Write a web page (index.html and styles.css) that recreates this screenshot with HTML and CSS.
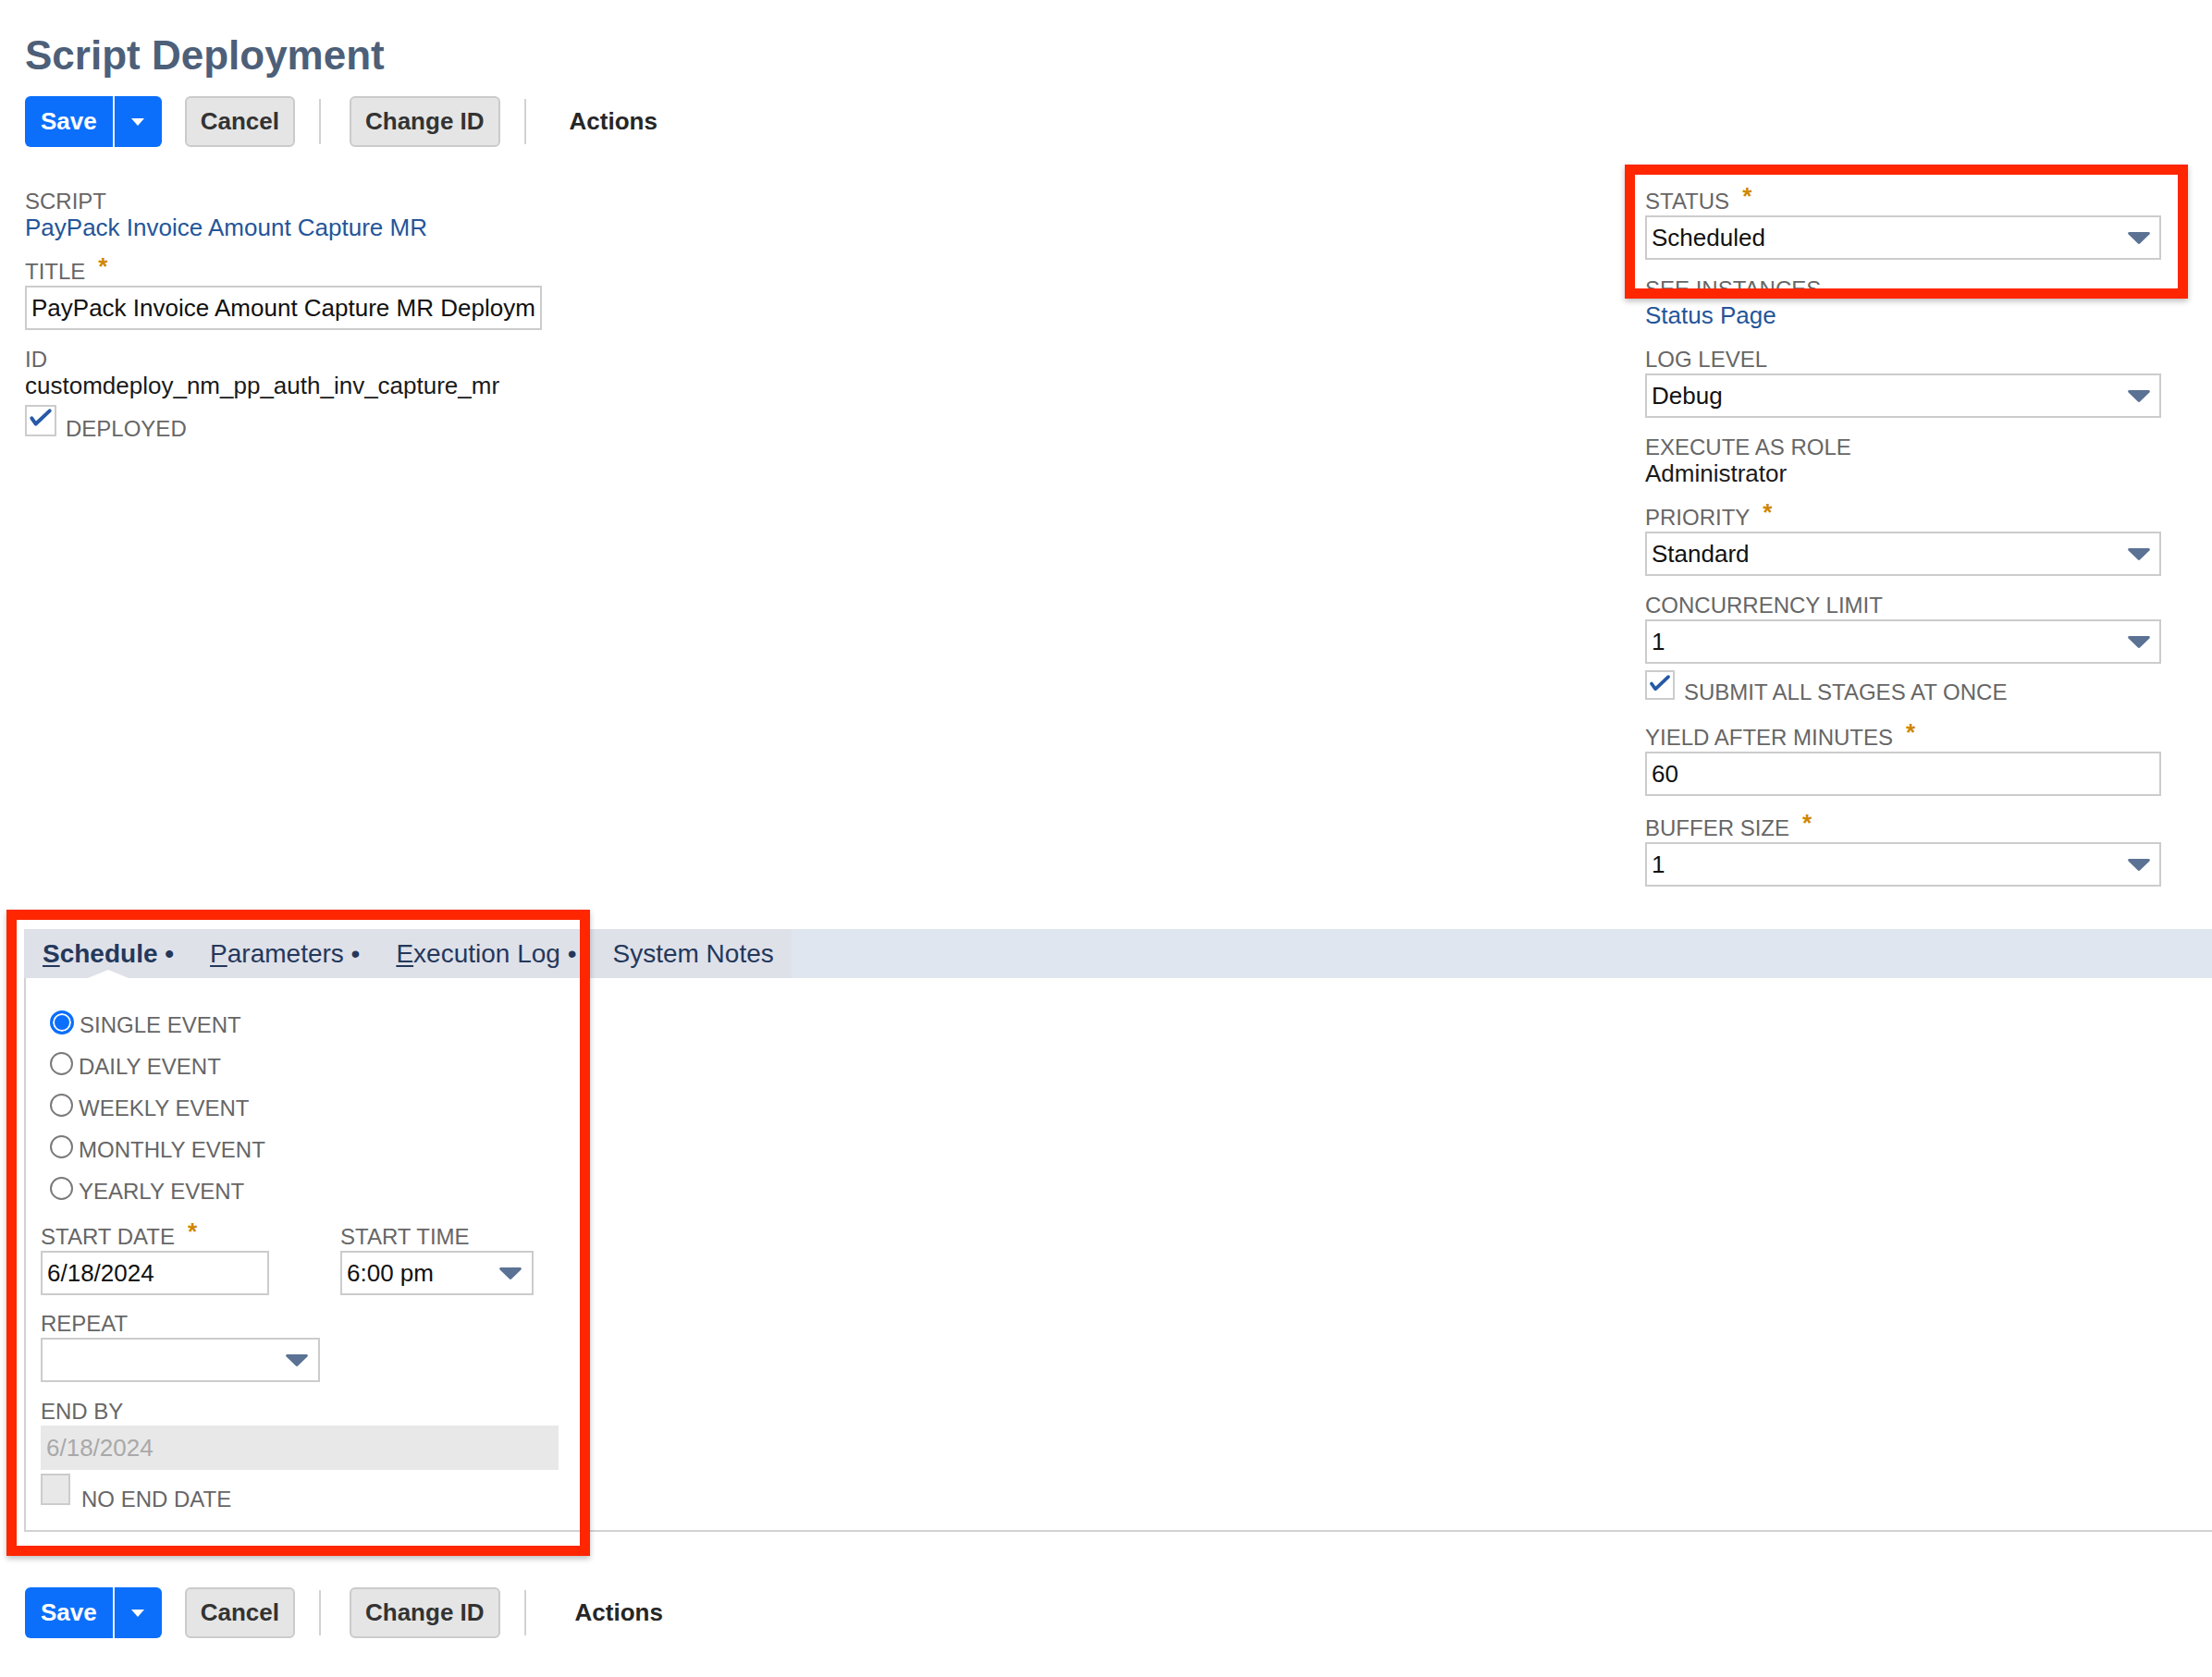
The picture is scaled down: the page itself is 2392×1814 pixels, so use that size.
FILE: index.html
```html
<!DOCTYPE html>
<html lang="en">
<head>
<meta charset="utf-8">
<title>Script Deployment</title>
<link rel="stylesheet" href="styles.css">
</head>
<body>
<div class="page">
  <h1 class="title">Script Deployment</h1>

  <div class="toolbar">
    <div class="btn-primary"><span class="btn-main">Save</span><span class="btn-split"><span class="caret"></span></span></div>
    <div class="btn">Cancel</div>
    <span class="sep"></span>
    <div class="btn btn-wide">Change ID</div>
    <span class="sep"></span>
    <div class="actions">Actions</div>
  </div>

  <div class="main">
    <div class="col-left">
      <div class="group group-val">
        <div class="label">Script</div>
        <a class="link">PayPack Invoice Amount Capture MR</a>
      </div>
      <div class="group">
        <div class="label">Title<span class="req">*</span></div>
        <input class="input input-title" type="text" value="PayPack Invoice Amount Capture MR Deployment">
      </div>
      <div class="group group-val group-id">
        <div class="label">ID</div>
        <div class="value">customdeploy_nm_pp_auth_inv_capture_mr</div>
      </div>
      <div class="check-row">
        <span class="checkbox"><svg viewBox="0 0 34 34" width="30" height="30"><path d="M6 14l5 7L28 5" stroke="#2659a6" stroke-width="4.5" fill="none" stroke-linecap="round" stroke-linejoin="round"/></svg></span>
        <span class="check-label">Deployed</span>
      </div>
    </div>

    <div class="col-right">
      <div class="group">
        <div class="label">Status<span class="req">*</span></div>
        <div class="select"><span>Scheduled</span><svg class="dd" viewBox="0 0 24 13" width="24" height="13"><path d="M1.6 0h20.8a1.4 1.4 0 0 1 1 2.4L13.3 12.2a1.8 1.8 0 0 1-2.6 0L.6 2.4A1.4 1.4 0 0 1 1.6 0z" fill="#5b7294"/></svg></div>
      </div>
      <div class="group group-val">
        <div class="label">See Instances</div>
        <a class="link">Status Page</a>
      </div>
      <div class="group">
        <div class="label">Log Level</div>
        <div class="select"><span>Debug</span><svg class="dd" viewBox="0 0 24 13" width="24" height="13"><path d="M1.6 0h20.8a1.4 1.4 0 0 1 1 2.4L13.3 12.2a1.8 1.8 0 0 1-2.6 0L.6 2.4A1.4 1.4 0 0 1 1.6 0z" fill="#5b7294"/></svg></div>
      </div>
      <div class="group group-val">
        <div class="label">Execute as Role</div>
        <div class="value">Administrator</div>
      </div>
      <div class="group">
        <div class="label">Priority<span class="req">*</span></div>
        <div class="select"><span>Standard</span><svg class="dd" viewBox="0 0 24 13" width="24" height="13"><path d="M1.6 0h20.8a1.4 1.4 0 0 1 1 2.4L13.3 12.2a1.8 1.8 0 0 1-2.6 0L.6 2.4A1.4 1.4 0 0 1 1.6 0z" fill="#5b7294"/></svg></div>
      </div>
      <div class="group group-tight">
        <div class="label">Concurrency Limit</div>
        <div class="select"><span>1</span><svg class="dd" viewBox="0 0 24 13" width="24" height="13"><path d="M1.6 0h20.8a1.4 1.4 0 0 1 1 2.4L13.3 12.2a1.8 1.8 0 0 1-2.6 0L.6 2.4A1.4 1.4 0 0 1 1.6 0z" fill="#5b7294"/></svg></div>
      </div>
      <div class="check-row check-stages">
        <span class="checkbox"><svg viewBox="0 0 34 34" width="30" height="30"><path d="M6 14l5 7L28 5" stroke="#2659a6" stroke-width="4.5" fill="none" stroke-linecap="round" stroke-linejoin="round"/></svg></span>
        <span class="check-label">Submit All Stages at Once</span>
      </div>
      <div class="group group-yield">
        <div class="label">Yield After Minutes<span class="req">*</span></div>
        <input class="input" type="text" value="60">
      </div>
      <div class="group group-last">
        <div class="label">Buffer Size<span class="req">*</span></div>
        <div class="select"><span>1</span><svg class="dd" viewBox="0 0 24 13" width="24" height="13"><path d="M1.6 0h20.8a1.4 1.4 0 0 1 1 2.4L13.3 12.2a1.8 1.8 0 0 1-2.6 0L.6 2.4A1.4 1.4 0 0 1 1.6 0z" fill="#5b7294"/></svg></div>
      </div>
    </div>
  </div>

  <div class="tabs">
    <div class="tabbar">
      <div class="tablist">
        <span class="tab active"><u>S</u>chedule •</span>
        <span class="tab"><u>P</u>arameters •</span>
        <span class="tab"><u>E</u>xecution Log •</span>
        <span class="tab">System Notes</span>
      </div>
    </div>
    <div class="panel">
      <div class="radios">
        <div class="radio-row"><span class="radio on"></span><span class="radio-label">Single Event</span></div>
        <div class="radio-row"><span class="radio"></span><span class="radio-label">Daily Event</span></div>
        <div class="radio-row"><span class="radio"></span><span class="radio-label">Weekly Event</span></div>
        <div class="radio-row"><span class="radio"></span><span class="radio-label">Monthly Event</span></div>
        <div class="radio-row"><span class="radio"></span><span class="radio-label">Yearly Event</span></div>
      </div>
      <div class="date-row">
        <div class="group group-date">
          <div class="label">Start Date<span class="req">*</span></div>
          <input class="input" type="text" value="6/18/2024">
        </div>
        <div class="group group-time">
          <div class="label">Start Time</div>
          <div class="select"><span>6:00 pm</span><svg class="dd" viewBox="0 0 24 13" width="24" height="13"><path d="M1.6 0h20.8a1.4 1.4 0 0 1 1 2.4L13.3 12.2a1.8 1.8 0 0 1-2.6 0L.6 2.4A1.4 1.4 0 0 1 1.6 0z" fill="#5b7294"/></svg></div>
        </div>
      </div>
      <div class="group group-repeat">
        <div class="label">Repeat</div>
        <div class="select"><span></span><svg class="dd" viewBox="0 0 24 13" width="24" height="13"><path d="M1.6 0h20.8a1.4 1.4 0 0 1 1 2.4L13.3 12.2a1.8 1.8 0 0 1-2.6 0L.6 2.4A1.4 1.4 0 0 1 1.6 0z" fill="#5b7294"/></svg></div>
      </div>
      <div class="group group-endby">
        <div class="label">End By</div>
        <div class="input-disabled">6/18/2024</div>
      </div>
      <div class="check-row check-noend">
        <span class="checkbox checkbox-disabled"></span>
        <span class="check-label">No End Date</span>
      </div>
    </div>
  </div>

  <div class="toolbar toolbar-bottom">
    <div class="btn-primary"><span class="btn-main">Save</span><span class="btn-split"><span class="caret"></span></span></div>
    <div class="btn">Cancel</div>
    <span class="sep"></span>
    <div class="btn btn-wide">Change ID</div>
    <span class="sep"></span>
    <div class="actions">Actions</div>
  </div>

  <div class="annot annot-status"></div>
  <div class="annot annot-tabs"></div>
</div>
</body>
</html>
```

FILE: styles.css
```css
html, body {
  margin: 0;
  padding: 0;
  background: #ffffff;
}

body {
  font-family: "Liberation Sans", Arial, Helvetica, sans-serif;
  color: #1f1f1f;
}

.page {
  position: relative;
  width: 2392px;
  height: 1814px;
  overflow: hidden;
  padding-left: 27px;
  box-sizing: border-box;
}

.title {
  margin: 34px 0 0 0;
  font-size: 44px;
  line-height: 52px;
  font-weight: bold;
  color: #4d5f79;
}

/* toolbar */
.toolbar {
  display: flex;
  align-items: center;
  margin-top: 18px;
  height: 55px;
}

.btn-primary {
  display: flex;
  height: 55px;
  background: #0b6ffc;
  border-radius: 6px;
  overflow: hidden;
  margin-right: 25px;
}

.btn-main {
  padding: 0 17px;
  font-size: 26px;
  font-weight: bold;
  line-height: 55px;
  color: #ffffff;
}

.btn-split {
  width: 51px;
  border-left: 2px solid rgba(255, 255, 255, 0.9);
  display: flex;
  align-items: center;
  justify-content: center;
}

.caret {
  width: 0;
  height: 0;
  border-left: 7px solid transparent;
  border-right: 7px solid transparent;
  border-top: 8px solid #ffffff;
}

.btn {
  height: 55px;
  box-sizing: border-box;
  padding: 0 15px;
  background: #e5e5e5;
  border: 2px solid #cbcbcb;
  border-radius: 6px;
  font-size: 26px;
  font-weight: bold;
  line-height: 51px;
  color: #333333;
}

.sep {
  width: 2px;
  height: 49px;
  background: #d2d2d2;
  margin: 0 31px 0 26px;
}

.actions {
  margin-left: 16px;
  font-size: 26px;
  font-weight: bold;
  color: #262626;
}

/* main form */
.main {
  display: flex;
  justify-content: space-between;
  align-items: flex-start;
  margin-top: 46px;
}

.col-left {
  width: 560px;
}

.col-right {
  width: 558px;
  margin-right: 55px;
}

.group {
  display: flex;
  flex-direction: column;
  margin-bottom: 19px;
}

.group-val {
  margin-bottom: 20px;
}

.group-id {
  margin-bottom: 6px;
}

.group-tight {
  margin-bottom: 7px;
}

.group-yield {
  margin-bottom: 22px;
}

.group-last {
  margin-bottom: 0;
}

.label {
  font-size: 24px;
  line-height: 26px;
  color: #666666;
  text-transform: uppercase;
  margin-bottom: 2px;
  white-space: nowrap;
}

.group-val .label {
  margin-bottom: 0;
}

.req {
  display: inline-block;
  color: #cf8700;
  margin-left: 14px;
  font-size: 26px;
  font-weight: bold;
  line-height: 0;
  vertical-align: 5px;
}

.link {
  font-size: 26px;
  line-height: 30px;
  color: #255599;
  text-decoration: none;
}

.value {
  font-size: 26px;
  line-height: 30px;
  color: #1a1a1a;
}

.input {
  box-sizing: border-box;
  height: 48px;
  border: 2px solid #cccccc;
  padding: 0 5px;
  margin: 0;
  font-family: "Liberation Sans", Arial, Helvetica, sans-serif;
  font-size: 26px;
  color: #111111;
  background: #ffffff;
  outline: none;
}

.input-title {
  width: 559px;
}

.select {
  box-sizing: border-box;
  height: 48px;
  border: 2px solid #cccccc;
  padding: 0 10px 0 5px;
  display: flex;
  align-items: center;
  justify-content: space-between;
  font-size: 26px;
  color: #111111;
  background: #ffffff;
}

.dd {
  flex: none;
}

/* checkboxes */
.check-row {
  display: flex;
  align-items: flex-end;
}

.checkbox {
  box-sizing: border-box;
  width: 34px;
  height: 34px;
  border: 2px solid #cccccc;
  background: #ffffff;
  display: flex;
  align-items: flex-start;
  justify-content: flex-start;
  flex: none;
}

.checkbox-disabled {
  background: #e8e8e8;
}

.check-label {
  margin-left: 10px;
  font-size: 24px;
  line-height: 24px;
  color: #666666;
  text-transform: uppercase;
  position: relative;
  top: 4px;
}

.check-stages {
  margin-bottom: 28px;
}

.check-stages .checkbox {
  width: 32px;
  height: 32px;
}

/* tabs */
.tabs {
  margin-top: 46px;
  margin-left: -1px;
}

.tabbar {
  height: 53px;
  background: #e0e6ef;
  display: flex;
}

.tablist {
  display: flex;
  background: #dfe1e9;
}

.tab {
  position: relative;
  padding: 0 19px 0 20px;
  font-size: 28px;
  line-height: 53px;
  color: #24385b;
  white-space: nowrap;
}

.tab u {
  text-decoration-thickness: 2px;
  text-underline-offset: 3px;
}

.tab.active {
  font-weight: bold;
}

.tab.active::after {
  content: "";
  position: absolute;
  left: 50%;
  bottom: 0;
  margin-left: -22px;
  width: 0;
  height: 0;
  border-left: 22px solid transparent;
  border-right: 22px solid transparent;
  border-bottom: 9px solid #ffffff;
}

.panel {
  border-left: 2px solid #d2d2d2;
  border-bottom: 2px solid #d2d2d2;
  padding: 25px 0 27px 16px;
}

.radios {
  display: flex;
  flex-direction: column;
  margin-left: 10px;
}

.radio-row {
  display: flex;
  align-items: center;
  height: 45px;
}

.radio {
  box-sizing: border-box;
  width: 25px;
  height: 25px;
  border: 2px solid #7a7a7a;
  border-radius: 50%;
  flex: none;
}

.radio.on {
  width: 26px;
  height: 26px;
  border: 3px solid #0b6ffc;
  background: #0b6ffc;
  box-shadow: inset 0 0 0 2px #ffffff;
}

.radio-label {
  margin-left: 6px;
  font-size: 24px;
  line-height: 28px;
  color: #666666;
  text-transform: uppercase;
  position: relative;
  top: 3px;
}

.date-row {
  display: flex;
  gap: 77px;
  margin-top: 17px;
}

.date-row .group {
  margin-bottom: 18px;
}

.group-date {
  width: 247px;
}

.group-date .input {
  width: 247px;
}

.group-time {
  width: 209px;
}

.group-time .select {
  padding-right: 11px;
}

.group-repeat {
  width: 302px;
}

.group-repeat .select {
  padding-right: 11px;
}

.group-endby {
  width: 560px;
  margin-bottom: 4px;
}

.input-disabled {
  box-sizing: border-box;
  height: 48px;
  background: #e8e8e8;
  padding: 0 6px;
  font-size: 26px;
  line-height: 48px;
  color: #a9a9a9;
}

.check-noend .check-label {
  margin-left: 12px;
  top: 6px;
}

.check-noend .checkbox {
  width: 32px;
}

/* bottom toolbar */
.toolbar-bottom {
  margin-top: 60px;
}

.toolbar-bottom .actions {
  margin-left: 22px;
}

/* annotation boxes */
.annot {
  position: absolute;
  box-sizing: border-box;
  border: 11px solid #ff2600;
  box-shadow: 0 3px 6px rgba(0, 0, 0, 0.25);
}

.annot-status {
  left: 1757px;
  top: 178px;
  width: 609px;
  height: 145px;
}

.annot-tabs {
  left: 7px;
  top: 984px;
  width: 631px;
  height: 699px;
}
```
